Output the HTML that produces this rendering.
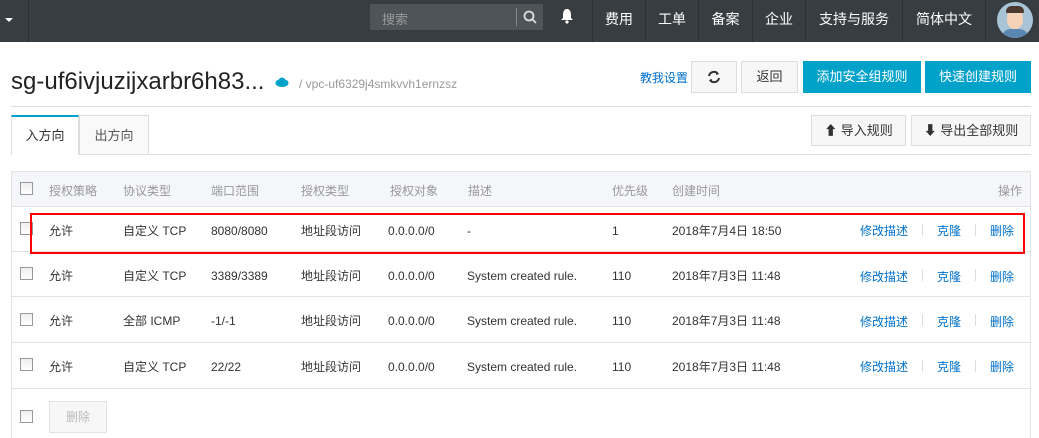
<!DOCTYPE html>
<html><head><meta charset="utf-8"><style>
*{margin:0;padding:0;box-sizing:border-box}
body{width:1039px;height:438px;overflow:hidden;background:#fff;font-family:"Liberation Sans","Noto Sans CJK SC",sans-serif;font-size:12px;color:#333;position:relative}
.a{position:absolute}
.nav{left:0;top:0;width:1039px;height:42px;background:#373d41}
.ni{top:0;height:42px;line-height:38px;color:#fff;font-size:14px;text-align:center;border-left:1px solid #2b3034}
.btn{border:1px solid #ddd;background:#f7f7f7;text-align:center;color:#333}
.blue{background:#00a2ca;color:#fff;text-align:center;font-size:13px}
.cb{width:13px;height:13px;border:1px solid #999;background:linear-gradient(#eee,#fff)}
.row{left:11px;width:1020px;border-bottom:1px solid #e3e3e3}
.t{line-height:14px}
.lk{color:#0070cc}
.sep{width:1px;height:12px;background:#ddd}
</style></head><body>
<div class="a nav"></div>
<div class="a" style="left:5px;top:18px;width:0;height:0;border-left:4px solid transparent;border-right:4px solid transparent;border-top:4px solid #fff"></div>
<div class="a" style="left:28px;top:0;width:1px;height:42px;background:#2b3034"></div>
<div class="a" style="left:370px;top:4px;width:173px;height:26px;background:#4f5458"></div>
<div class="a" style="left:382px;top:9px;color:#999;font-size:13px">搜索</div>
<div class="a" style="left:516px;top:8px;width:1px;height:18px;background:#888"></div>
<svg class="a" style="left:523px;top:10px" width="14" height="14"><circle cx="6" cy="6" r="4.5" stroke="#ddd" stroke-width="1.8" fill="none"/><line x1="9.5" y1="9.5" x2="13" y2="13" stroke="#ddd" stroke-width="1.8"/></svg>
<svg class="a" style="left:560px;top:8px" width="14" height="16"><path d="M7 1C4 1 3 4 3 7v3L1 12h12l-2-2V7c0-3-1-6-4-6z" fill="#fff"/><circle cx="7" cy="14" r="1.6" fill="#fff"/></svg>
<div class="a ni" style="left:592px;width:53px">费用</div>
<div class="a ni" style="left:645px;width:53px">工单</div>
<div class="a ni" style="left:698px;width:54px">备案</div>
<div class="a ni" style="left:752px;width:53px">企业</div>
<div class="a ni" style="left:805px;width:97px">支持与服务</div>
<div class="a ni" style="left:902px;width:83px">简体中文</div>
<div class="a ni" style="left:985px;width:54px"></div>
<div class="a" style="left:997px;top:2px;width:36px;height:36px;border-radius:50%;background:#a8c4d6;overflow:hidden"><div class="a" style="left:10px;top:7px;width:16px;height:20px;border-radius:45%;background:#f4d3b8"></div><div class="a" style="left:9px;top:4px;width:18px;height:7px;border-radius:8px 8px 2px 2px;background:#4a3a30"></div><div class="a" style="left:4px;top:27px;width:28px;height:12px;border-radius:10px 10px 0 0;background:#5a86b0"></div></div>

<div class="a" style="left:11px;top:68px;font-size:24px;color:#222;line-height:28px">sg-uf6ivjuzijxarbr6h83...</div>
<svg class="a" style="left:275px;top:77px" width="14" height="10"><ellipse cx="7" cy="6" rx="6.5" ry="4" fill="#00a2ca"/><circle cx="7" cy="4" r="3.5" fill="#00a2ca"/></svg>
<div class="a" style="left:299px;top:77px;color:#999;font-size:12px">/ vpc-uf6329j4smkvvh1ernzsz</div>
<div class="a lk" style="left:640px;top:69px;font-size:12px">教我设置</div>
<div class="a btn" style="left:691px;top:61px;width:46px;height:32px"><svg style="margin-top:8px" width="14" height="14" viewBox="0 0 14 14"><path d="M2 6a5 5 0 0 1 9-2M12 8a5 5 0 0 1-9 2" stroke="#333" stroke-width="2" fill="none"/><path d="M9 1l3 3-3 1z M5 13l-3-3 3-1z" fill="#333"/></svg></div>
<div class="a btn" style="left:741px;top:61px;width:57px;height:32px;line-height:30px;font-size:13px">返回</div>
<div class="a blue" style="left:803px;top:61px;width:118px;height:32px;line-height:32px">添加安全组规则</div>
<div class="a blue" style="left:925px;top:61px;width:106px;height:32px;line-height:32px">快速创建规则</div>
<div class="a" style="left:11px;top:106px;width:1020px;height:1px;background:#ddd"></div>

<div class="a" style="left:11px;top:115px;width:68px;height:40px;border:1px solid #ddd;border-top:2px solid #00a2ca;border-bottom:none;background:#fff;text-align:center;line-height:38px;font-size:13px">入方向</div>
<div class="a" style="left:79px;top:115px;width:70px;height:40px;border:1px solid #ddd;background:#f9f9f9;text-align:center;line-height:40px;font-size:13px;color:#555">出方向</div>
<div class="a" style="left:149px;top:154px;width:882px;height:1px;background:#ddd"></div>
<div class="a btn" style="left:811px;top:115px;width:95px;height:31px;line-height:29px;font-size:13px">⬆ 导入规则</div>
<div class="a btn" style="left:911px;top:115px;width:120px;height:31px;line-height:29px;font-size:13px">⬇ 导出全部规则</div>

<div class="a" style="left:11px;top:171px;width:1020px;height:267px;border:1px solid #e3e3e3;border-bottom:none"></div>
<div class="a" style="left:12px;top:172px;width:1018px;height:35px;background:#f5f6fa;border-bottom:1px solid #e3e3e3"></div>
<div class="a cb" style="left:20px;top:182px"></div>
<div class="a t" style="left:49px;top:184px;color:#999">授权策略</div>
<div class="a t" style="left:123px;top:184px;color:#999">协议类型</div>
<div class="a t" style="left:211px;top:184px;color:#999">端口范围</div>
<div class="a t" style="left:301px;top:184px;color:#999">授权类型</div>
<div class="a t" style="left:390px;top:184px;color:#999">授权对象</div>
<div class="a t" style="left:468px;top:184px;color:#999">描述</div>
<div class="a t" style="left:612px;top:184px;color:#999">优先级</div>
<div class="a t" style="left:672px;top:184px;color:#999">创建时间</div>
<div class="a t" style="left:998px;top:184px;color:#999">操作</div>

<div class="a row" style="top:207px;height:45px"></div>
<div class="a row" style="top:252px;height:45px"></div>
<div class="a row" style="top:297px;height:46px"></div>
<div class="a row" style="top:343px;height:46px"></div>

<div class="a cb" style="left:20px;top:222px"></div>
<div class="a t" style="left:49px;top:224px">允许</div><div class="a t" style="left:123px;top:224px">自定义 TCP</div><div class="a t" style="left:211px;top:224px">8080/8080</div><div class="a t" style="left:301px;top:224px">地址段访问</div><div class="a t" style="left:388px;top:224px">0.0.0.0/0</div><div class="a t" style="left:467px;top:224px">-</div><div class="a t" style="left:612px;top:224px">1</div><div class="a t" style="left:672px;top:224px">2018年7月4日 18:50</div>
<div class="a t lk" style="left:860px;top:224px">修改描述</div><div class="a sep" style="left:922px;top:224px"></div><div class="a t lk" style="left:937px;top:224px">克隆</div><div class="a sep" style="left:975px;top:224px"></div><div class="a t lk" style="left:990px;top:224px">删除</div>

<div class="a cb" style="left:20px;top:267px"></div>
<div class="a t" style="left:49px;top:269px">允许</div><div class="a t" style="left:123px;top:269px">自定义 TCP</div><div class="a t" style="left:211px;top:269px">3389/3389</div><div class="a t" style="left:301px;top:269px">地址段访问</div><div class="a t" style="left:388px;top:269px">0.0.0.0/0</div><div class="a t" style="left:467px;top:269px">System created rule.</div><div class="a t" style="left:612px;top:269px">110</div><div class="a t" style="left:672px;top:269px">2018年7月3日 11:48</div>
<div class="a t lk" style="left:860px;top:270px">修改描述</div><div class="a sep" style="left:922px;top:269px"></div><div class="a t lk" style="left:937px;top:270px">克隆</div><div class="a sep" style="left:975px;top:269px"></div><div class="a t lk" style="left:990px;top:270px">删除</div>

<div class="a cb" style="left:20px;top:313px"></div>
<div class="a t" style="left:49px;top:314px">允许</div><div class="a t" style="left:123px;top:314px">全部 ICMP</div><div class="a t" style="left:211px;top:314px">-1/-1</div><div class="a t" style="left:301px;top:314px">地址段访问</div><div class="a t" style="left:388px;top:314px">0.0.0.0/0</div><div class="a t" style="left:467px;top:314px">System created rule.</div><div class="a t" style="left:612px;top:314px">110</div><div class="a t" style="left:672px;top:314px">2018年7月3日 11:48</div>
<div class="a t lk" style="left:860px;top:315px">修改描述</div><div class="a sep" style="left:922px;top:314px"></div><div class="a t lk" style="left:937px;top:315px">克隆</div><div class="a sep" style="left:975px;top:314px"></div><div class="a t lk" style="left:990px;top:315px">删除</div>

<div class="a cb" style="left:20px;top:358px"></div>
<div class="a t" style="left:49px;top:360px">允许</div><div class="a t" style="left:123px;top:360px">自定义 TCP</div><div class="a t" style="left:211px;top:360px">22/22</div><div class="a t" style="left:301px;top:360px">地址段访问</div><div class="a t" style="left:388px;top:360px">0.0.0.0/0</div><div class="a t" style="left:467px;top:360px">System created rule.</div><div class="a t" style="left:612px;top:360px">110</div><div class="a t" style="left:672px;top:360px">2018年7月3日 11:48</div>
<div class="a t lk" style="left:860px;top:360px">修改描述</div><div class="a sep" style="left:922px;top:360px"></div><div class="a t lk" style="left:937px;top:360px">克隆</div><div class="a sep" style="left:975px;top:360px"></div><div class="a t lk" style="left:990px;top:360px">删除</div>

<div class="a cb" style="left:20px;top:410px"></div>
<div class="a" style="left:49px;top:401px;width:58px;height:32px;border:1px solid #e3e3e3;background:#f7f7f7;color:#bbb;text-align:center;line-height:30px">删除</div>

<div class="a" style="left:30px;top:213px;width:995px;height:41px;border:2px solid #f00"></div>
</body></html>
